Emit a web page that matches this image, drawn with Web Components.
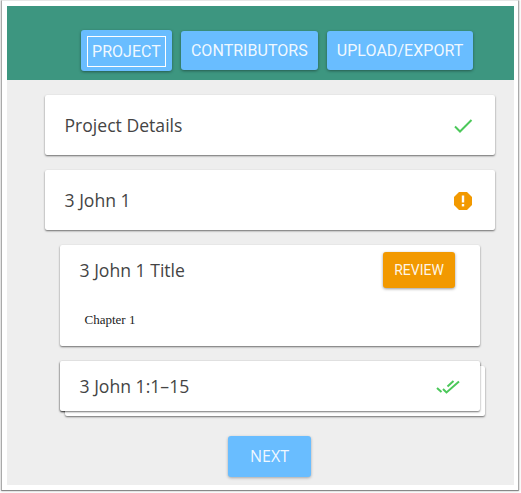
<!DOCTYPE html>
<html>
<head>
<meta charset="utf-8">
<style>
  html, body { margin: 0; padding: 0; background: #fff; }
  body { width: 521px; height: 493px; overflow: hidden; }
</style>
</head>
<body>
<app-window>
  <top-bar slot="bar">
    <tab-button active>PROJECT</tab-button>
    <tab-button>CONTRIBUTORS</tab-button>
    <tab-button>UPLOAD/EXPORT</tab-button>
  </top-bar>
  <step-card title="Project Details" icon="check"></step-card>
  <step-card title="3 John 1" icon="alert"></step-card>
  <title-card title="3 John 1 Title" action="REVIEW">Chapter 1</title-card>
  <stack-card title="3 John 1:1–15"></stack-card>
  <next-button>NEXT</next-button>
</app-window>

<script>
const ICONS = {
  check: `<svg width="20" height="16" viewBox="0 0 20 16"><path d="M2 9.500L7 14.500L18.500 3" fill="none" stroke="#4cc85a" stroke-width="2"/></svg>`,
  alert: `<svg width="20" height="20" viewBox="0 -1 20 20"><polygon points="6,1 14,1 19,6 19,14 14,19 6,19 1,14 1,6" fill="#f29900"/><rect x="8.800" y="4.500" width="2.400" height="7" fill="#fff"/><rect x="8.800" y="13" width="2.400" height="2.400" fill="#fff"/></svg>`,
  double: `<svg width="24" height="16" viewBox="0 0 24 16"><path d="M1 10L5.500 14M7 11L10.500 14.500L23 3.500M11.500 8.500L17.500 3" fill="none" stroke="#4cc85a" stroke-width="2"/></svg>`
};

class AppWindow extends HTMLElement {
  constructor() {
    super();
    this.attachShadow({ mode: 'open' });
    this.shadowRoot.innerHTML = `
      <style>
        :host { display: block; width: 518px; height: 491px; box-sizing: border-box; margin-left: 1px;
          padding: 5px; background: #fff; box-shadow: 0 0 2px rgba(0,0,0,.35);
          border-left: 1px solid #aaa; border-right: 1px solid #aaa; border-bottom: 1px solid #888; border-top: 1px solid #e6e6e6; }
        .page { height: 479px; width: 507px; background: #eee; }
        main { display: flex; flex-direction: column; align-items: center; width: 450px; margin-left: 38px; padding-top: 15px; gap: 15px; }
      </style>
      <div class="page">
        <slot name="bar"></slot>
        <main><slot></slot></main>
      </div>`;
  }
}

class TopBar extends HTMLElement {
  constructor() {
    super();
    this.attachShadow({ mode: 'open' });
    this.shadowRoot.innerHTML = `
      <style>
        :host { display: flex; align-items: center; gap: 9px; height: 74px; box-sizing: border-box;
          padding: 24px 0 9px 74px; background: #3d9680; }
      </style>
      <slot></slot>`;
  }
}

class TabButton extends HTMLElement {
  constructor() {
    super();
    this.attachShadow({ mode: 'open' });
    this.shadowRoot.innerHTML = `
      <style>
        :host { display: block; box-sizing: border-box; height: 39px; padding: 0 10px; border-radius: 3px;
          background: #69bdff; color: rgba(255,255,255,.92); font: 16px/39px Roboto, sans-serif; letter-spacing: .04px;
          box-shadow: 0 1px 3px rgba(0,0,0,.4); }
        :host([active]) { height: 41px; padding: 6px; line-height: 29px; }
        .in { display: block; }
        :host([active]) .in { border: 1px solid #fff; padding: 0 4px; }
      </style>
      <span class="in"><slot></slot></span>`;
  }
}

class StepCard extends HTMLElement {
  constructor() {
    super();
    this.attachShadow({ mode: 'open' });
    const icon = this.getAttribute('icon');
    this.shadowRoot.innerHTML = `
      <style>
        :host { display: flex; align-items: center; justify-content: space-between; box-sizing: border-box;
          width: 450px; height: 60px; padding: 0 22px 0 19.500px; background: #fff; border-radius: 2px;
          box-shadow: 0 1px 2px rgba(0,0,0,.55); color: #444;
          font: 17.600px "Open Sans", sans-serif; }
        svg { display: block; }
      </style>
      <span>${this.getAttribute('title')}</span>${ICONS[icon]}`;
  }
}

class TitleCard extends HTMLElement {
  constructor() {
    super();
    this.attachShadow({ mode: 'open' });
    this.shadowRoot.innerHTML = `
      <style>
        :host { display: block; box-sizing: border-box; width: 420px; height: 101px; padding: 7px 25px 0 19.500px;
          background: #fff; border-radius: 2px; box-shadow: 0 1px 2px rgba(0,0,0,.55); color: #444; }
        .head { display: flex; align-items: center; justify-content: space-between; height: 36px;
          font: 17.600px "Open Sans", sans-serif; }
        button { width: 72px; height: 36px; border: 0; padding: 0; border-radius: 3px; background: #f29900; color: rgba(255,255,255,.92);
          font: 14px Roboto, sans-serif; box-shadow: 0 1px 3px rgba(0,0,0,.4); }
        p { margin: 24px 0 0 5px; color: #222; font: 13px/16px "Liberation Serif", serif; }
      </style>
      <div class="head"><span>${this.getAttribute('title')}</span><button>${this.getAttribute('action')}</button></div>
      <p><slot></slot></p>`;
  }
}

class StackCard extends HTMLElement {
  constructor() {
    super();
    this.attachShadow({ mode: 'open' });
    this.shadowRoot.innerHTML = `
      <style>
        :host { display: flex; position: relative; align-items: center; justify-content: space-between; box-sizing: border-box;
          width: 420px; height: 50px; padding: 0 20px 0 19.500px; background: #fff; border-radius: 2px;
          box-shadow: 0 1px 2px rgba(0,0,0,.55); color: #444;
          font: 17.600px "Open Sans", sans-serif; z-index: 0; }
        .back { position: absolute; left: 5px; top: 5px; width: 100%; height: 100%; background: #fff; border-radius: 2px;
          box-shadow: 0 1px 2px rgba(0,0,0,.55); z-index: -2; }
        .front { position: absolute; inset: 0; background: #fff; border-radius: 2px;
          box-shadow: 0 1px 2px rgba(0,0,0,.55); z-index: -1; }
        svg { display: block; }
      </style>
      <div class="back"></div><div class="front"></div>
      <span>${this.getAttribute('title')}</span>${ICONS.double}`;
  }
}

class NextButton extends HTMLElement {
  constructor() {
    super();
    this.attachShadow({ mode: 'open' });
    this.shadowRoot.innerHTML = `
      <style>
        :host { display: block; margin: 10px 1px 0 0; width: 83px; height: 41px; border-radius: 3px; background: #69bdff;
          color: rgba(255,255,255,.92); text-align: center; font: 16px/41px "Open Sans", sans-serif;
          box-shadow: 0 1px 3px rgba(0,0,0,.3); }
      </style>
      <slot></slot>`;
  }
}

customElements.define('app-window', AppWindow);
customElements.define('top-bar', TopBar);
customElements.define('tab-button', TabButton);
customElements.define('step-card', StepCard);
customElements.define('title-card', TitleCard);
customElements.define('stack-card', StackCard);
customElements.define('next-button', NextButton);
</script>
</body>
</html>
